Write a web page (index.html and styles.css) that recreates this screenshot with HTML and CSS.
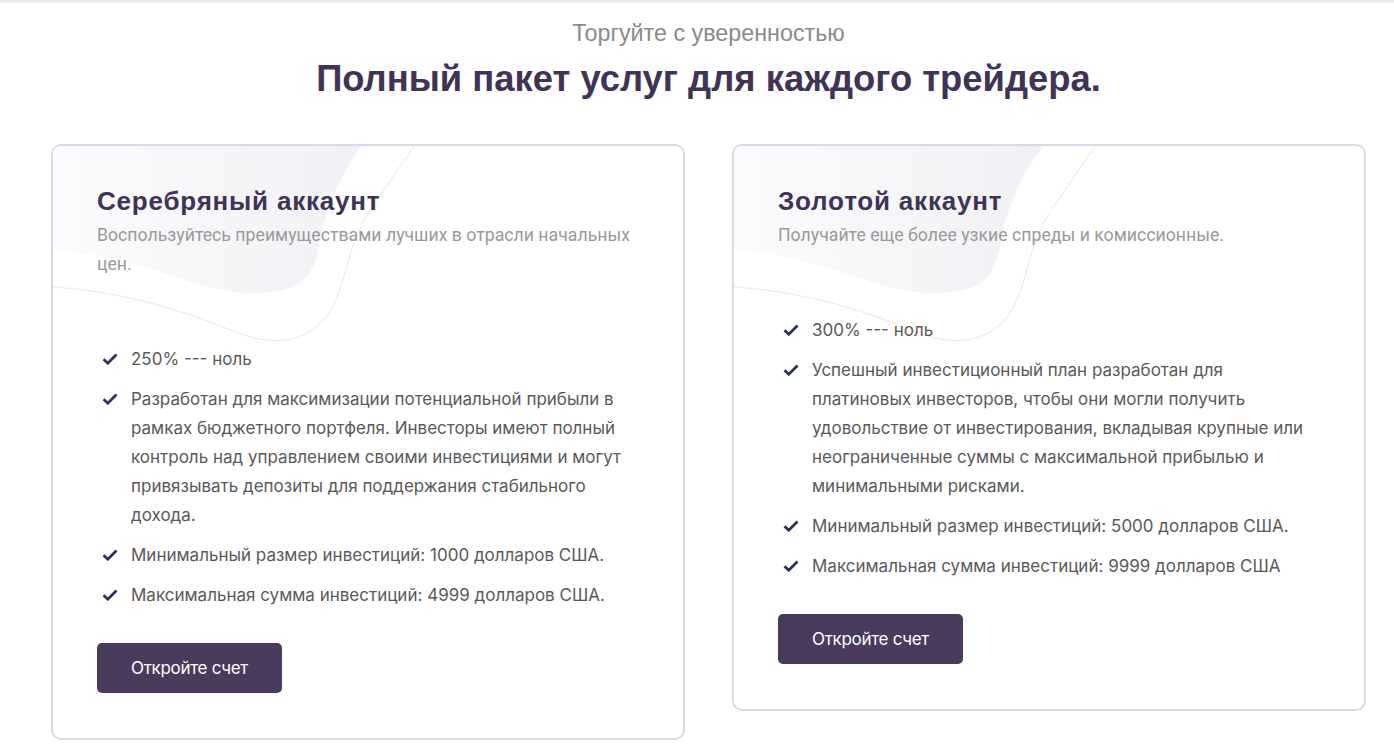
FILE: index.html
```html
<!DOCTYPE html>
<html lang="ru">
<head>
<meta charset="utf-8">
<title>Полный пакет услуг</title>
<link rel="stylesheet" href="styles.css">
</head>
<body>
<div class="topshade"></div>
<main class="wrap">
  <header class="head">
    <p class="kicker">Торгуйте с уверенностью</p>
    <h1 class="title">Полный пакет услуг для каждого трейдера.</h1>
  </header>
  <section class="cards">
    <article class="card">
      <svg class="deco" width="634" height="210" viewBox="0 0 634 210" aria-hidden="true">
        <defs>
          <linearGradient id="g1" x1="0" y1="0" x2="1" y2="0">
            <stop offset="0" stop-color="#fbfbfd"/>
            <stop offset="1" stop-color="#f1f1f5"/>
          </linearGradient>
        </defs>
        <path d="M0,0 H309 C290,25 272,60 266,100 C260,130 250,147 199,147 C140,147 100,112 0,104 Z" fill="url(#g1)"/>
        <path d="M0,141 C60,145 120,160 180,185 C220,202 260,198 280,160 C295,130 295,95 320,60 C340,30 355,10 361,0" fill="none" stroke="#fbe1dc" stroke-width="1"/>
      </svg>
      <div class="card-body">
        <h2 class="card-title">Серебряный аккаунт</h2>
        <p class="card-desc">Воспользуйтесь преимуществами лучших в отрасли начальных цен.</p>
        <ul class="features">
          <li><svg class="check" viewBox="0 0 16 12"><path d="M1.5 6.2 L5.8 10.2 L14.5 1.6" fill="none" stroke="#29325c" stroke-width="2.8"/></svg><span>250% --- ноль</span></li>
          <li><svg class="check" viewBox="0 0 16 12"><path d="M1.5 6.2 L5.8 10.2 L14.5 1.6" fill="none" stroke="#29325c" stroke-width="2.8"/></svg><span>Разработан для максимизации потенциальной прибыли в рамках бюджетного портфеля. Инвесторы имеют полный контроль над управлением своими инвестициями и могут привязывать депозиты для поддержания стабильного дохода.</span></li>
          <li><svg class="check" viewBox="0 0 16 12"><path d="M1.5 6.2 L5.8 10.2 L14.5 1.6" fill="none" stroke="#29325c" stroke-width="2.8"/></svg><span>Минимальный размер инвестиций: 1000 долларов США.</span></li>
          <li><svg class="check" viewBox="0 0 16 12"><path d="M1.5 6.2 L5.8 10.2 L14.5 1.6" fill="none" stroke="#29325c" stroke-width="2.8"/></svg><span>Максимальная сумма инвестиций: 4999 долларов США.</span></li>
        </ul>
        <a class="btn" href="#">Откройте счет</a>
      </div>
    </article>
    <article class="card">
      <svg class="deco" width="634" height="210" viewBox="0 0 634 210" aria-hidden="true">
        <defs>
          <linearGradient id="g2" x1="0" y1="0" x2="1" y2="0">
            <stop offset="0" stop-color="#fbfbfd"/>
            <stop offset="1" stop-color="#f1f1f5"/>
          </linearGradient>
        </defs>
        <path d="M0,0 H309 C290,25 272,60 266,100 C260,130 250,147 199,147 C140,147 100,112 0,104 Z" fill="url(#g2)"/>
        <path d="M0,141 C60,145 120,160 180,185 C220,202 260,198 280,160 C295,130 295,95 320,60 C340,30 355,10 361,0" fill="none" stroke="#fbe1dc" stroke-width="1"/>
      </svg>
      <div class="card-body">
        <h2 class="card-title">Золотой аккаунт</h2>
        <p class="card-desc">Получайте еще более узкие спреды и комиссионные.</p>
        <ul class="features">
          <li><svg class="check" viewBox="0 0 16 12"><path d="M1.5 6.2 L5.8 10.2 L14.5 1.6" fill="none" stroke="#29325c" stroke-width="2.8"/></svg><span>300% --- ноль</span></li>
          <li><svg class="check" viewBox="0 0 16 12"><path d="M1.5 6.2 L5.8 10.2 L14.5 1.6" fill="none" stroke="#29325c" stroke-width="2.8"/></svg><span>Успешный инвестиционный план разработан для платиновых инвесторов, чтобы они могли получить удовольствие от инвестирования, вкладывая крупные или неограниченные суммы с максимальной прибылью и минимальными рисками.</span></li>
          <li><svg class="check" viewBox="0 0 16 12"><path d="M1.5 6.2 L5.8 10.2 L14.5 1.6" fill="none" stroke="#29325c" stroke-width="2.8"/></svg><span>Минимальный размер инвестиций: 5000 долларов США.</span></li>
          <li><svg class="check" viewBox="0 0 16 12"><path d="M1.5 6.2 L5.8 10.2 L14.5 1.6" fill="none" stroke="#29325c" stroke-width="2.8"/></svg><span>Максимальная сумма инвестиций: 9999 долларов США</span></li>
        </ul>
        <a class="btn" href="#">Откройте счет</a>
      </div>
    </article>
  </section>
</main>
</body>
</html>
```
FILE: styles.css
```css
* { box-sizing: border-box; }
html, body { margin: 0; padding: 0; background: #fff; }
body { font-family: "Liberation Sans", Arial, sans-serif; }

.topshade {
  height: 4px;
  background: linear-gradient(#e6e6e6, rgba(255,255,255,0));
}

.wrap {
  width: 1315px;
  margin-left: 51px;
}

.head {
  text-align: center;
  padding-top: 16px;
}

.kicker {
  margin: 0;
  font-size: 23.3px;
  line-height: 26px;
  color: #8a8a8a;
}

.title {
  margin: 13px 0 0;
  font-size: 36.4px;
  line-height: 40px;
  font-weight: 700;
  color: #3f3356;
}

.cards {
  display: flex;
  align-items: flex-start;
  gap: 47px;
  margin-top: 45px;
}

.card {
  position: relative;
  width: 634px;
  border: 2px solid #dcd7e6;
  border-radius: 10px;
  overflow: hidden;
  background: #fff;
}

.deco {
  position: absolute;
  left: 0;
  top: 0;
  display: block;
}

.card-body {
  position: relative;
  padding: 39px 44px 45px;
}

.card-title {
  margin: 0;
  font-family: "Liberation Sans", Arial, sans-serif;
  font-size: 26px;
  line-height: 32px;
  font-weight: 700;
  letter-spacing: 0.8px;
  color: #3f3356;
}

.card-desc {
  margin: 4px 0 0;
  font-family: Roboto, "Liberation Sans", sans-serif;
  font-size: 17.7px;
  line-height: 29px;
  color: #999999;
}

.features {
  list-style: none;
  margin: 66px 0 0;
  padding: 0;
  display: flex;
  flex-direction: column;
  gap: 11px;
}

.features li {
  display: flex;
  align-items: flex-start;
  gap: 13px;
  font-family: Inter, "Liberation Sans", sans-serif;
  font-size: 17px;
  line-height: 29px;
  color: #595959;
}

.check {
  flex: none;
  width: 16px;
  height: 12px;
  margin: 8px 0 0 5px;
}

.btn {
  display: inline-flex;
  align-items: center;
  justify-content: center;
  margin-top: 33px;
  width: 185px;
  height: 50px;
  border-radius: 5px;
  background: #4a3a5c;
  color: #fff;
  text-decoration: none;
  font-family: Inter, "Liberation Sans", sans-serif;
  font-size: 17px;
  letter-spacing: -0.3px;
}
```
